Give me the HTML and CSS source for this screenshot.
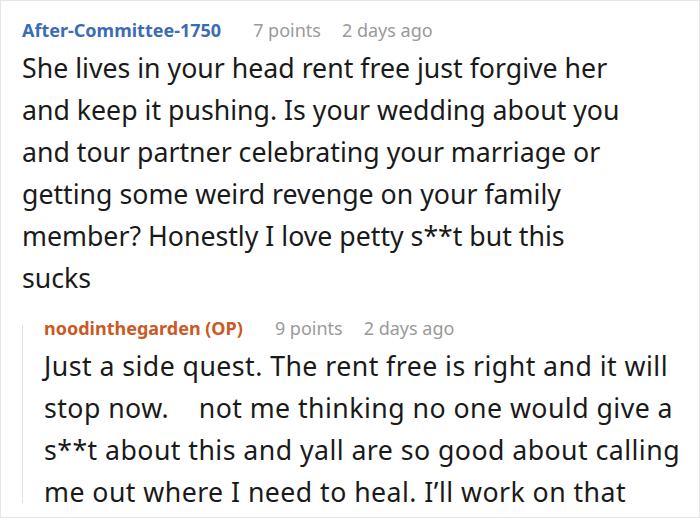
FILE: index.html
```html
<!DOCTYPE html>
<html>
<head>
<meta charset="utf-8">
<link rel="stylesheet" href="styles.css">
</head>
<body>
<div class="frame">
  <div class="comment">
    <div class="meta">
      <span class="user">After-Committee-1750</span>
      <span class="info points">7 points</span>
      <span class="info">2 days ago</span>
    </div>
    <div class="body top">She lives in your head rent free just forgive her and keep it pushing. Is your wedding about you and tour partner celebrating your marriage or getting some weird revenge on your family member? Honestly I love petty s**t but this<br>sucks</div>
    <div class="reply">
      <div class="rule"></div>
      <div class="reply-content">
        <div class="meta">
          <span class="user op">noodinthegarden (OP)</span>
          <span class="info points">9 points</span>
          <span class="info">2 days ago</span>
        </div>
        <div class="body wide">Just a side quest. The rent free is right and it will stop now. &nbsp;&nbsp; not me thinking no one would give a s**t about this and yall are so good about calling me out where I need to heal. I’ll work on that</div>
      </div>
    </div>
  </div>
</div>
</body>
</html>
```
FILE: styles.css
```css
html, body {
  margin: 0;
  padding: 0;
  background: #fff;
}
.frame {
  width: 698px;
  height: 516px;
  border: 1px solid #e6e6e6;
  overflow: hidden;
  font-family: "Noto Sans", "Open Sans", sans-serif;
}
.comment {
  padding: 17px 0 0 21px;
}
.meta {
  display: flex;
  font-size: 18px;
  line-height: 24px;
  align-items: baseline;
  white-space: nowrap;
}
.user {
  font-weight: 700;
  color: #3c6cb4;
}
.user.op {
  color: #c95a25;
}
.info {
  color: #9a9a9a;
  margin-left: 21px;
}
.info.points {
  margin-left: 32px;
}
.body {
  margin-top: 5px;
  font-size: 26.7px;
  line-height: 42px;
  color: #1a1a1a;
  width: 648px;
}
.body.top {
  width: 626px;
}
.body.wide {
  letter-spacing: 0.45px;
}
.reply {
  display: flex;
  margin-top: 17px;
}
.rule {
  width: 1px;
  background: #e2e2e2;
  margin: 9px 0 10px 0;
  flex: none;
}
.reply-content {
  padding-left: 21px;
}
```
